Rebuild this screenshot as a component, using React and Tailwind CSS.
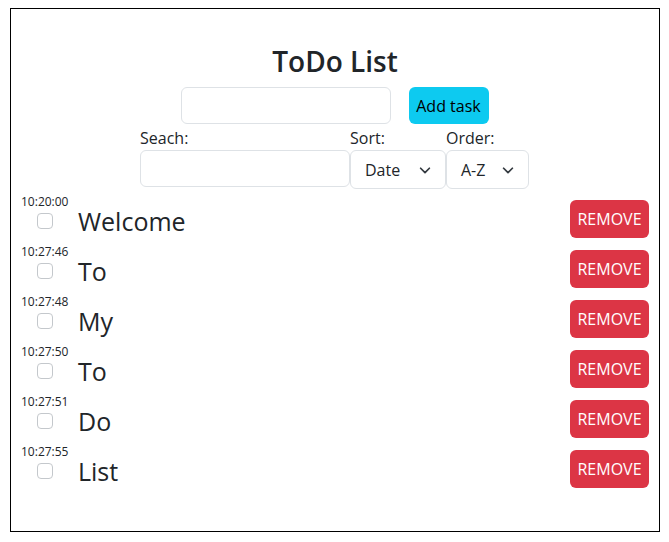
import React from 'react';

const tasks = [
    { time: '10:20:00', text: 'Welcome' },
    { time: '10:27:46', text: 'To' },
    { time: '10:27:48', text: 'My' },
    { time: '10:27:50', text: 'To' },
    { time: '10:27:51', text: 'Do' },
    { time: '10:27:55', text: 'List' },
];

function Chevron() {
    return (
        <svg className="pointer-events-none absolute top-1/2 -translate-y-1/2" style={{ right: 14 }} width="14" height="14" viewBox="0 0 16 16" fill="none">
            <path d="M3 6l5 5 5-5" stroke="#343a40" strokeWidth="2" strokeLinecap="round" strokeLinejoin="round" />
        </svg>
    );
}

function Select({ value, width }) {
    return (
        <div className="relative" style={{ width }}>
            <div className="h-[39px] w-full border border-[#dee2e6] rounded-[6px] bg-white flex items-center pl-[14px] text-[16px] text-[#212529]">
                {value}
            </div>
            <Chevron />
        </div>
    );
}

export default function App() {
    return (
        <div className="font-['Open_Sans',sans-serif] text-[#212529] bg-white w-[669px] h-[542px] pt-[8px] pl-[10px]">
            <div className="w-[650px] h-[524px] border border-black pt-[36px] flex flex-col">
                <h2 className="text-center text-[28px] font-semibold leading-[32px] mb-[10px]">ToDo List</h2>
                <div className="flex justify-center gap-[18px] pr-[1px]">
                    <input className="w-[210px] h-[37px] border border-[#dee2e6] rounded-[6px] px-3 outline-none" />
                    <button className="w-[80px] h-[37px] bg-[#0dcaf0] rounded-[6px] text-[16px] text-black">Add task</button>
                </div>
                <div className="flex justify-center mt-[2px] pr-[1px]">
                    <div className="flex flex-col w-[210px]">
                        <label className="text-[16px] leading-[24px] h-[24px]">Seach:</label>
                        <input className="h-[37px] border border-[#dee2e6] rounded-[6px] px-3 outline-none" />
                    </div>
                    <div className="flex flex-col w-[96px]">
                        <label className="text-[16px] leading-[24px] h-[24px]">Sort:</label>
                        <Select value="Date" width={96} />
                    </div>
                    <div className="flex flex-col w-[83px]">
                        <label className="text-[16px] leading-[24px] h-[24px]">Order:</label>
                        <Select value="A-Z" width={83} />
                    </div>
                </div>
                <div className="mt-[6px] px-[10px] flex flex-col">
                    {tasks.map((t, i) => (
                        <div key={i} className="flex items-start justify-between h-[50px]">
                            <div className="flex flex-col">
                                <div className="text-[12px] leading-[14px] h-[14px]">{t.time}</div>
                                <div className="flex items-center h-[24px]">
                                    <div className="ml-[16px] w-[16px] h-[16px] border border-[#c4c8cc] rounded-[4px] bg-white" />
                                    <span className="ml-[25px] text-[25px] leading-[24px]">{t.text}</span>
                                </div>
                            </div>
                            <button className="mt-[5px] w-[79px] h-[38px] bg-[#dc3545] rounded-[6px] text-white text-[16px] uppercase">Remove</button>
                        </div>
                    ))}
                </div>
            </div>
        </div>
    );
}
